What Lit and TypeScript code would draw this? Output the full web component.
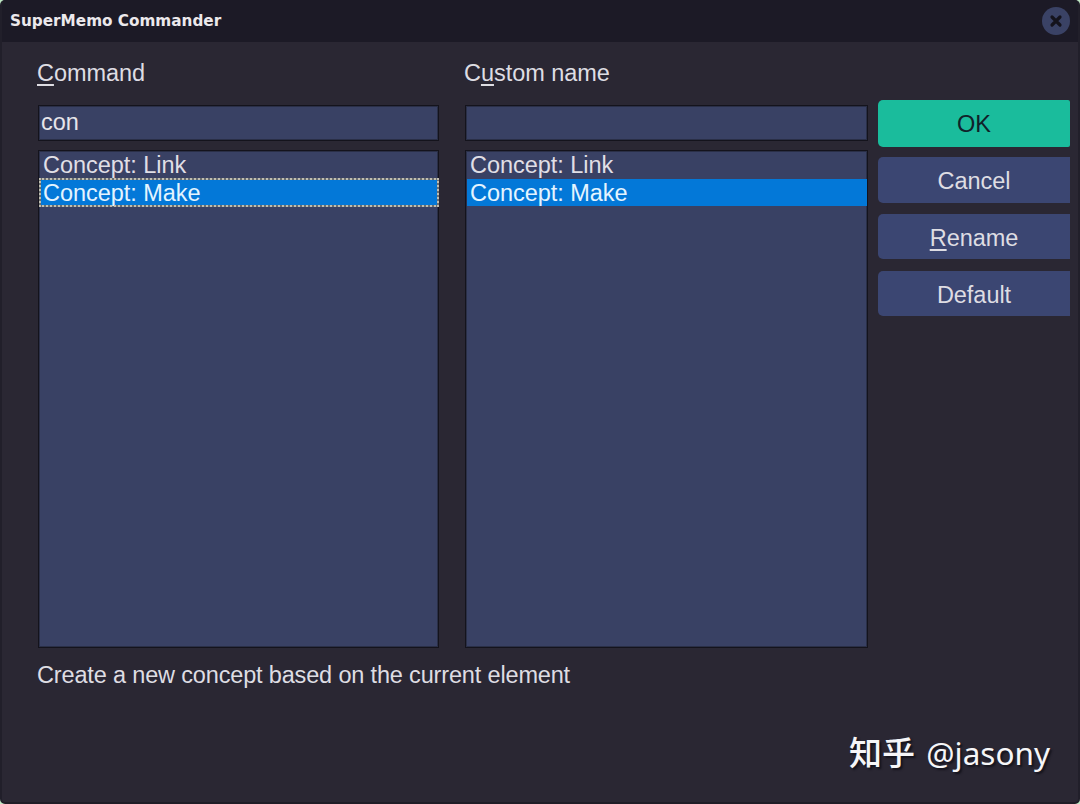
import { LitElement, css, html } from 'lit';
import { customElement } from 'lit/decorators.js';

@customElement('app-root')
export class AppRoot extends LitElement {
  // Renders one list box with the second row selected.
  private list(focused: boolean) {
    return html`
      <div class="list">
        <div class="row">Concept: Link</div>
        <div class="row selected ${focused ? 'focused' : ''}">Concept: Make</div>
      </div>
    `;
  }

  render() {
    return html`
      <div class="window">
        <header class="titlebar">
          <span class="title">SuperMemo Commander</span>
          <span class="close">
            <svg width="14" height="14" viewBox="0 0 14 14">
              <path d="M3 3 L11 11 M11 3 L3 11" stroke="#14131c" stroke-width="3.2" stroke-linecap="round" />
            </svg>
          </span>
        </header>
        <main class="body">
          <div class="columns">
            <div class="col left">
              <label class="label"><u>C</u>ommand</label>
              <div class="input">con</div>
              ${this.list(true)}
            </div>
            <div class="col right">
              <label class="label">C<u>u</u>stom name</label>
              <div class="input"></div>
              ${this.list(false)}
            </div>
            <div class="buttons">
              <button class="ok">OK</button>
              <button class="cancel">Cancel</button>
              <button class="rename"><u>R</u>ename</button>
              <button class="default">Default</button>
            </div>
          </div>
          <p class="status">Create a new concept based on the current element</p>
        </main>
        <div class="mark"><span class="cjk">知乎</span> @jasony</div>
      </div>
    `;
  }

  static styles = css`
    :host {
      display: block;
      width: 1080px;
      height: 804px;
      background: #bfe8c4;
      font-family: 'Liberation Sans', Arial, sans-serif;
    }

    .window {
      position: relative;
      height: 804px;
      box-sizing: border-box;
      background: #2a2733;
      border-radius: 5px;
      border-left: 2px solid #211f2a;
      border-right: 2px solid #211f2a;
      border-bottom: 2px solid #1f1d27;
      overflow: hidden;
      display: flex;
      flex-direction: column;
    }

    .titlebar {
      height: 42px;
      margin: 0 -2px;
      flex: none;
      background: #1c1a26;
      display: flex;
      align-items: center;
      justify-content: space-between;
      padding: 0 10px 0 10px;
    }

    .title {
      font-family: 'DejaVu Sans', sans-serif;
      font-weight: 700;
      font-size: 15.25px;
      color: #ece9ec;
    }

    .close {
      width: 28px;
      height: 28px;
      border-radius: 50%;
      background: #3a4265;
      display: flex;
      align-items: center;
      justify-content: center;
    }

    .body {
      padding: 0 0 0 36px;
      color: #dedde3;
      font-size: 23.5px;
      letter-spacing: -0.04px;
    }

    .columns {
      display: flex;
      align-items: flex-start;
    }

    .col {
      display: flex;
      flex-direction: column;
    }

    .left {
      width: 401px;
      margin-right: 26px;
    }

    .right {
      width: 403px;
      margin-right: 10px;
    }

    .label {
      height: 63px;
      margin-left: -1px;
      line-height: 62px;
    }

    .input {
      height: 36px;
      box-sizing: border-box;
      background: #394164;
      border: 1px solid #14131c;
      box-shadow: inset 0 0 0 1px rgba(20, 19, 28, 0.4);
      padding-left: 2px;
      line-height: 33px;
      margin-bottom: 9px;
      color: #e6e5ea;
    }

    .list {
      height: 498px;
      box-sizing: border-box;
      background: #394164;
      border: 1px solid #14131c;
      box-shadow: inset 0 0 0 1px rgba(20, 19, 28, 0.4);
      padding: 1px 0 0 1px;
    }

    .row {
      height: 27px;
      line-height: 27px;
      padding-left: 3px;
      color: #e0dfe6;
    }

    .selected {
      background: #0378d8;
      color: #e4f4ff;
      line-height: 28px;
    }

    .focused {
      outline: 2px dotted #c0beb0;
      outline-offset: -1px;
      box-shadow: 0 0 0 1px #6a6e70, inset 0 0 0 1px #6a6e70;
    }

    .buttons {
      width: 192px;
      padding-top: 58px;
      display: flex;
      flex-direction: column;
    }

    button {
      font: inherit;
      letter-spacing: inherit;
      border: none;
      padding: 2px 0 0;
      border-radius: 5px 0 0 5px;
      background: #3b4672;
      color: #dedde3;
      text-align: center;
    }

    .ok {
      height: 47px;
      margin-bottom: 10px;
      background: #1abc9c;
      color: #10222a;
      border-radius: 5px 2px 2px 5px;
    }

    .cancel {
      height: 46px;
      margin-bottom: 11px;
    }

    .rename {
      height: 45px;
      margin-bottom: 12px;
      padding-top: 4px;
    }

    .default {
      height: 45px;
      padding-top: 4px;
    }

    .status {
      margin: 13px 0 0 -1px;
      line-height: 28px;
      letter-spacing: -0.16px;
    }

    .mark {
      position: absolute;
      left: 847px;
      top: 729px;
      font-family: 'Noto Sans', 'Noto Sans CJK SC', sans-serif;
      font-size: 31.5px;
      line-height: 44px;
      word-spacing: 3px;
      color: #f6f6f8;
      text-shadow: 2px 2px 2px #14131c;
      white-space: nowrap;
    }

    .cjk {
      font-family: 'Noto Sans CJK SC', sans-serif;
      font-size: 33px;
      font-weight: 500;
    }

    u {
      text-underline-offset: 3px;
    }
  `;
}
